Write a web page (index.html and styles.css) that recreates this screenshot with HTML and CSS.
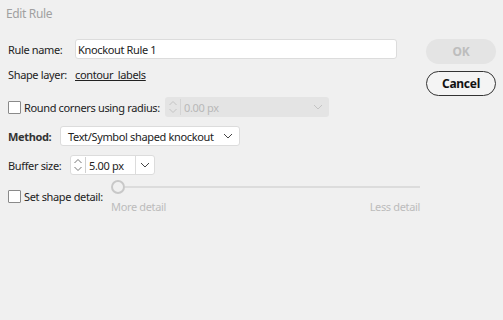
FILE: index.html
```html
<!DOCTYPE html>
<html>
<head>
  <title>Edit Rule</title>
  <link rel="stylesheet" href="styles.css">
</head>
<body>
  <div class="dialog">
    <div class="title">Edit Rule</div>
    <div class="content">
      <div class="form">
        <div class="row">
          <label class="label" for="ruleName">Rule name:</label>
          <input type="text" id="ruleName" class="text-input" value="Knockout Rule 1">
        </div>
        <div class="row row-layer">
          <span class="label">Shape layer:</span>
          <a class="link">contour_labels</a>
        </div>
        <div class="row row-round">
          <span class="checkbox"></span>
          <span class="check-label round-label">Round corners using radius:</span>
          <div class="spinner spinner-disabled">
            <svg class="updown" width="10" height="16" viewBox="0 0 10 16"><path d="M1.5 6 L5 2.5 L8.5 6 M1.5 10 L5 13.5 L8.5 10" fill="none" stroke="#c4c4c4" stroke-width="1"/></svg>
            <span class="spin-text">0.00 px</span>
            <svg class="chev" width="10" height="6" viewBox="0 0 10 6"><path d="M1 1 L5 5 L9 1" fill="none" stroke="#c4c4c4" stroke-width="1"/></svg>
          </div>
        </div>
        <div class="row row-method">
          <span class="label-bold">Method:</span>
          <div class="select">
            <span class="select-text">Text/Symbol shaped knockout</span>
            <svg class="chev" width="10" height="6" viewBox="0 0 10 6"><path d="M1 1 L5 5 L9 1" fill="none" stroke="#444" stroke-width="1"/></svg>
          </div>
        </div>
        <div class="row row-buffer">
          <span class="label-buffer">Buffer size:</span>
          <div class="spinner spinner-buffer">
            <svg class="updown" width="10" height="16" viewBox="0 0 10 16"><path d="M1.5 6 L5 2.5 L8.5 6 M1.5 10 L5 13.5 L8.5 10" fill="none" stroke="#777" stroke-width="1"/></svg>
            <span class="spin-text">5.00 px</span>
            <span class="drop">
              <svg width="10" height="6" viewBox="0 0 10 6"><path d="M1 1 L5 5 L9 1" fill="none" stroke="#444" stroke-width="1"/></svg>
            </span>
          </div>
        </div>
        <div class="row-detail">
          <div class="detail-check">
            <span class="checkbox"></span>
            <span class="check-label">Set shape detail:</span>
          </div>
          <div class="slider">
            <div class="track">
              <span class="thumb"></span>
              <span class="line"></span>
            </div>
            <div class="slider-labels">
              <span>More detail</span>
              <span>Less detail</span>
            </div>
          </div>
        </div>
      </div>
      <div class="buttons">
        <button class="btn btn-ok" disabled>OK</button>
        <button class="btn btn-cancel">Cancel</button>
      </div>
    </div>
  </div>
</body>
</html>
```

FILE: styles.css
```css
body {
  margin: 0;
  background-color: #f0f0f0;
  font-family: "Noto Sans", "Open Sans", sans-serif;
  font-size: 11px;
  letter-spacing: -0.35px;
  color: #222;
  white-space: nowrap;
}

.dialog {
  width: 503px;
  height: 320px;
}

.title {
  height: 39px;
  box-sizing: border-box;
  padding: 5px 6px 0;
  color: #a0a0a0;
  font-size: 12px;
}

.content {
  display: flex;
  padding: 0 7px 0 8px;
}

.form {
  width: 412px;
}

.row {
  display: flex;
  align-items: center;
  height: 20px;
}

.label {
  width: 67px;
}

.text-input {
  width: 322px;
  height: 20px;
  box-sizing: border-box;
  margin: 0;
  padding: 0 2px;
  border: 1px solid #dcdcdc;
  border-radius: 3px;
  background-color: #fff;
  font-family: inherit;
  font-size: 11px;
  letter-spacing: -0.35px;
  color: #222;
  outline: none;
}

.row-layer {
  margin-top: 5px;
}

.link {
  color: #222;
  text-decoration: underline;
}

.row-round {
  margin-top: 13px;
}

.checkbox {
  width: 11px;
  height: 11px;
  border: 1px solid #8a8a8a;
  border-radius: 1px;
  background-color: #fff;
  flex: none;
}

.check-label {
  margin-left: 3px;
}

.round-label {
  width: 141px;
}

.spinner {
  display: flex;
  align-items: center;
  height: 20px;
  box-sizing: border-box;
  border-radius: 3px;
}

.spinner-disabled {
  width: 164px;
  background-color: #e4e4e4;
  color: #b8b8b8;
}

.updown {
  margin: 0 1px 0 3px;
  padding-right: 2px;
  border-right: 1px solid #d0d0d0;
}

.spinner-disabled .updown {
  border-right-color: #d4d4d4;
}

.spin-text {
  flex: 1;
  margin-left: 2px;
}

.chev {
  margin-right: 6px;
}

.row-method {
  margin-top: 9px;
}

.label-bold {
  width: 52px;
  font-weight: bold;
  color: #333;
}

.select {
  display: flex;
  align-items: center;
  width: 180px;
  height: 20px;
  box-sizing: border-box;
  padding-left: 7px;
  border: 1px solid #dcdcdc;
  border-radius: 3px;
  background-color: #fff;
}

.select-text {
  flex: 1;
}

.row-buffer {
  margin-top: 9px;
}

.label-buffer {
  width: 62px;
}

.spinner-buffer {
  width: 85px;
  border: 1px solid #dcdcdc;
  background-color: #fff;
}

.spinner-buffer .updown {
  margin-left: 2px;
}

.drop {
  display: flex;
  align-items: center;
  justify-content: center;
  width: 18px;
  height: 100%;
  border-left: 1px solid #dcdcdc;
}

.row-detail {
  display: flex;
  margin-top: 5px;
}

.detail-check {
  display: flex;
  align-items: center;
  width: 103px;
  height: 20px;
  margin-top: 6px;
}

.slider {
  flex: 1;
}

.track {
  display: flex;
  align-items: center;
  height: 14px;
}

.thumb {
  width: 10px;
  height: 10px;
  border: 2px solid #c8c8c8;
  border-radius: 50%;
  background-color: #f0f0f0;
  flex: none;
}

.line {
  flex: 1;
  height: 2px;
  background-color: #dcdcdc;
}

.slider-labels {
  display: flex;
  justify-content: space-between;
  margin-top: 5px;
  color: #bcbcbc;
}

.buttons {
  display: flex;
  flex-direction: column;
  gap: 7px;
  margin-left: 6px;
}

.btn {
  width: 70px;
  height: 25px;
  border-radius: 13px;
  font-family: inherit;
  font-size: 12px;
  font-weight: bold;
  letter-spacing: -0.3px;
}

.btn-ok {
  border: none;
  background-color: #e4e4e4;
  color: #bdbdbd;
}

.btn-cancel {
  border: 1px solid #333;
  background-color: #f4f4f4;
  color: #111;
}
```
